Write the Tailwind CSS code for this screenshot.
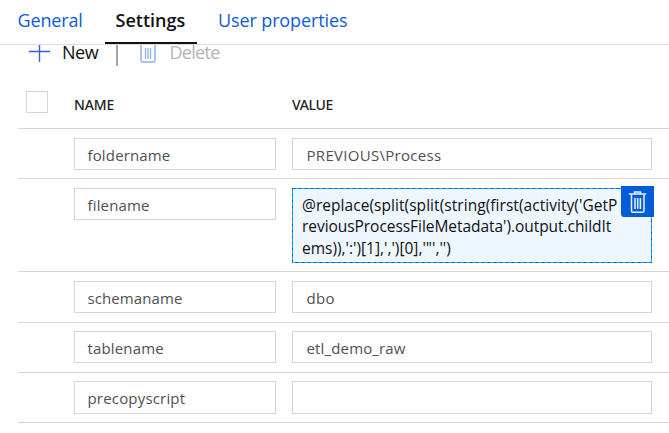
<!DOCTYPE html>
<html lang="en">
<head>
<meta charset="utf-8">
<title>Settings</title>
<script src="https://cdn.jsdelivr.net/npm/@tailwindcss/browser@4"></script>
</head>
<body class="h-[433px] w-[669px] overflow-hidden bg-white font-['Open_Sans','Noto_Sans',sans-serif] text-[15px] text-[#505050]">
  <nav class="flex h-[45px] border-b border-[#dcdcdc] pl-[17px] text-[18px] leading-[40px] text-[#0f5bdb] whitespace-nowrap">
    <a class="w-[88px] pl-[0.5px] tracking-[-0.15px]">General</a>
    <a class="h-[44px] w-[92px] border-b-2 border-[#111] pl-[10.5px] font-semibold text-[#111]">Settings</a>
    <a class="pl-[21px] tracking-[-0.12px]">User properties</a>
  </nav>

  <div class="flex h-[33px] items-start pl-[29px] text-[18px] leading-[15px] whitespace-nowrap">
    <svg class="h-[17px] w-[21px]" viewBox="0 0 21 17" fill="none" stroke="#2764d8" stroke-width="1.4"><path d="M0 6.5H21M10.5 0V17"/></svg>
    <span class="w-[66px] pl-[12px] tracking-[-0.5px] text-[#111]">New</span>
    <span class="h-[21px] w-[2px] bg-[#a5a5a5]"></span>
    <svg class="ml-[22px] h-[18px] w-[16px]" viewBox="0 0 16 18" fill="none" stroke="#8eb1f4"><path d="M1 0V15.5Q1 17 2.500 17H13.500Q15 17 15 15.500V0" stroke-width="1.5"/><path d="M5.500 3V14M8 3V14M10.500 3V14" stroke-width="1.3"/></svg>
    <span class="pl-[13.5px] tracking-[-0.7px] text-[#b5b5b5]">Delete</span>
  </div>

  <div class="ml-[18px] border-b border-[#d6d6d6]">
    <div class="flex h-[50px] pt-[13px] pl-[8px] text-[14px] leading-[27px] font-medium text-[#222]">
      <span class="h-[22px] w-[22px] border border-[#d6d6d6]"></span>
      <span class="w-[244px] pl-[26px] font-['Noto_Sans'] tracking-[-0.1px]">NAME</span>
      <span class="font-['Noto_Sans'] tracking-[-0.35px]">VALUE</span>
    </div>

    <div class="flex h-[50px] gap-[16px] border-t border-[#d6d6d6] pt-[9px] pl-[56px]">
      <div class="h-[32px] w-[202px] border border-[#d6d6d6] pl-[12.5px] leading-[33px] tracking-[0.15px]">foldername</div>
      <div class="h-[32px] w-[360px] border border-[#d6d6d6] pl-[13.5px] leading-[33px] tracking-[0.3px]">PREVIOUS\Process</div>
    </div>

    <div class="flex h-[93px] gap-[16px] border-t border-[#d6d6d6] pt-[9px] pl-[56px]">
      <div class="h-[32px] w-[202px] border border-[#d6d6d6] pl-[12.5px] leading-[33px] tracking-[0.15px]">filename</div>
      <div class="relative h-[75px] w-[360px] bg-[#eef6ff] pt-[6.5px] pl-[10px] text-[15.5px] leading-[21.5px] whitespace-nowrap text-[#111]">
        <svg class="absolute top-0 left-0 h-[75px] w-[360px]" viewBox="0 0 360 75" fill="none"><rect x=".5" y=".5" width="359" height="74" stroke="#14b4f5"/><rect x=".5" y=".5" width="359" height="74" stroke="#0862dc" stroke-dasharray="3 3"/></svg>
        <div class="tracking-[0.05px]">@replace(split(split(string(first(activity('GetP</div>
        <div class="tracking-[-0.05px]">reviousProcessFileMetadata').output.childIt</div>
        <div>ems)),':')[1],',')[0],'"','')</div>
        <span class="absolute -top-[2px] -right-[2px] flex h-[31px] w-[33px] justify-center rounded-bl-[3px] bg-[#005cda] pt-[5px]">
          <svg class="h-[23px] w-[19px]" viewBox="0 0 19 23" fill="none" stroke="#eaf2ff"><path d="M0.8 3H18.200M6.500 3V1H12.500V3" stroke-width="1.500"/><path d="M3.5 3.5V20Q3.5 21.300 4.800 21.300H14.700Q16 21.300 16 20V3.5" stroke-width="1.500"/><path d="M7 7V18M9.700 7V18M12.400 7V18" stroke-width="1.500"/></svg>
        </span>
      </div>
    </div>

    <div class="flex h-[51px] gap-[16px] border-t border-[#d6d6d6] pt-[9px] pl-[56px]">
      <div class="h-[32px] w-[202px] border border-[#d6d6d6] pl-[12.5px] leading-[33px] tracking-[0.1px]">schemaname</div>
      <div class="h-[32px] w-[360px] border border-[#d6d6d6] pl-[13.5px] leading-[33px] tracking-[0.3px]">dbo</div>
    </div>

    <div class="flex h-[50px] gap-[16px] border-t border-[#d6d6d6] pt-[8px] pl-[56px]">
      <div class="h-[32px] w-[202px] border border-[#d6d6d6] pl-[12.5px] leading-[33px] tracking-[0.15px]">tablename</div>
      <div class="h-[32px] w-[360px] border border-[#d6d6d6] pl-[13.5px] leading-[33px] tracking-[0.15px]">etl_demo_raw</div>
    </div>

    <div class="flex h-[50px] gap-[16px] border-t border-[#d6d6d6] pt-[8px] pl-[56px]">
      <div class="h-[33px] w-[202px] border border-[#d6d6d6] pl-[12.5px] leading-[33px] tracking-[0.18px]">precopyscript</div>
      <div class="h-[33px] w-[360px] border border-[#d6d6d6]"></div>
    </div>
  </div>
</body>
</html>
